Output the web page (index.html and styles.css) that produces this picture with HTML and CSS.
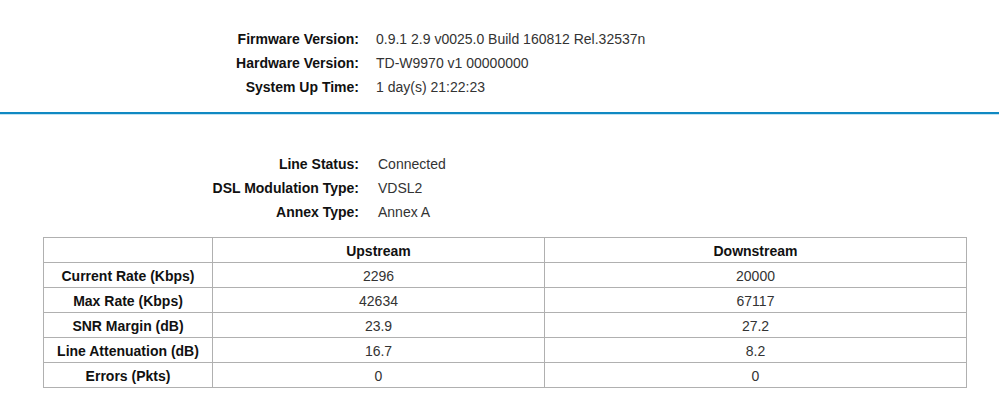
FILE: index.html
```html
<!DOCTYPE html>
<html>
<head>
<meta charset="utf-8">
<link rel="stylesheet" href="styles.css">
</head>
<body>
<section class="info top">
  <div class="label">Firmware Version:</div><div class="value">0.9.1 2.9 v0025.0 Build 160812 Rel.32537n</div>
  <div class="label">Hardware Version:</div><div class="value">TD-W9970 v1 00000000</div>
  <div class="label">System Up Time:</div><div class="value">1 day(s) 21:22:23</div>
</section>
<div class="divider"></div>
<section class="info dsl">
  <div class="label">Line Status:</div><div class="value">Connected</div>
  <div class="label">DSL Modulation Type:</div><div class="value">VDSL2</div>
  <div class="label">Annex Type:</div><div class="value">Annex A</div>
</section>
<table class="stats">
  <colgroup><col class="c1"><col class="c2"><col class="c3"></colgroup>
  <tr><th></th><th>Upstream</th><th>Downstream</th></tr>
  <tr><th>Current Rate (Kbps)</th><td>2296</td><td>20000</td></tr>
  <tr><th>Max Rate (Kbps)</th><td>42634</td><td>67117</td></tr>
  <tr><th>SNR Margin (dB)</th><td>23.9</td><td>27.2</td></tr>
  <tr><th>Line Attenuation (dB)</th><td>16.7</td><td>8.2</td></tr>
  <tr><th>Errors (Pkts)</th><td>0</td><td>0</td></tr>
</table>
</body>
</html>
```
FILE: styles.css
```css
html, body {
  margin: 0;
  padding: 0;
  background: #fff;
}
body {
  font-family: "Liberation Sans", Arial, sans-serif;
  font-size: 14px;
  color: #333;
}
.info {
  display: grid;
  grid-template-columns: 359px auto;
  column-gap: 17px;
  line-height: 24px;
}
.info .label {
  text-align: right;
  font-weight: bold;
  color: #111;
}
.info .value {
  color: #333;
}
.top {
  padding-top: 27px;
}
.dsl {
  margin-top: 37px;
  column-gap: 19px;
}
.divider {
  margin-top: 13px;
  height: 2px;
  background: #1089c2;
  border-bottom: 1px solid #c4e4f3;
}
.stats {
  margin: 13px 0 0 43px;
  border-collapse: collapse;
  width: 923px;
  table-layout: fixed;
}
.stats .c1 { width: 169px; }
.stats .c2 { width: 332px; }
.stats .c3 { width: 422px; }
.stats th, .stats td {
  border: 1px solid #b0b0b0;
  height: 23px;
  line-height: 16px;
  padding: 1px 0 0;
  text-align: center;
}
.stats th {
  font-weight: bold;
  color: #111;
}
.stats td {
  color: #333;
}
```
